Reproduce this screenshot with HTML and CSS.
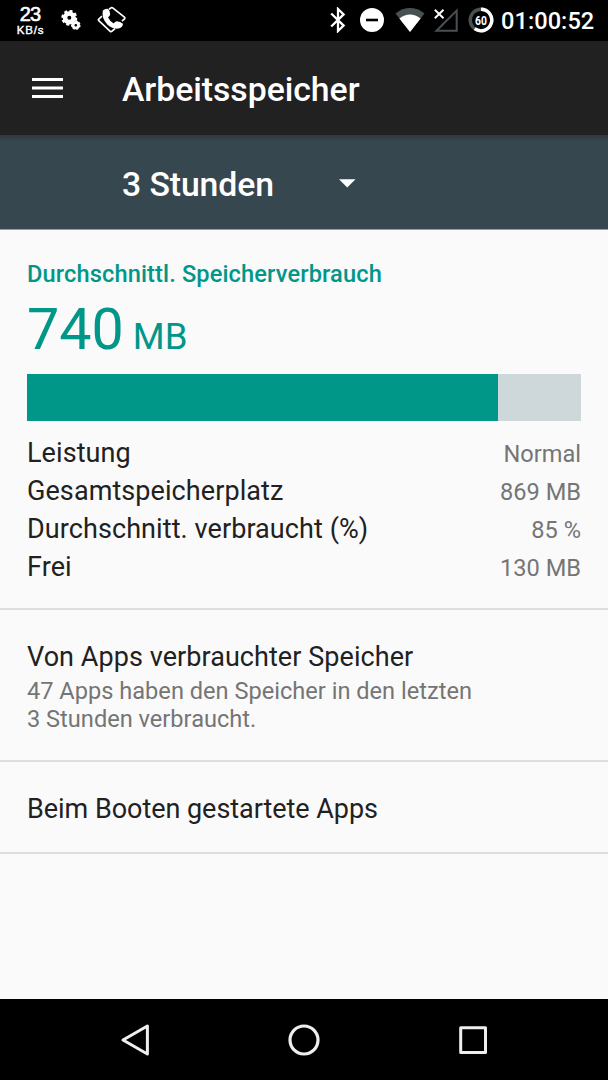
FILE: index.html
```html
<!DOCTYPE html>
<html lang="de">
<head>
<meta charset="utf-8">
<title>Arbeitsspeicher</title>
<link rel="stylesheet" href="styles.css">
</head>
<body>
<div class="screen">
  <div class="statusbar">
    <div class="status-left">
      <div class="netspeed"><span class="netspeed-value">23</span><span class="netspeed-unit">KB/s</span></div>
      <svg class="icon-gears" width="20" height="22" viewBox="0 0 20 22">
        <circle cx="8.3" cy="7.8" r="4.3" fill="none" stroke="#fff" stroke-width="4.6"/>
        <circle cx="8.3" cy="7.8" r="6.6" fill="none" stroke="#fff" stroke-width="2.8" stroke-dasharray="2.9 2.284"/>
        <circle cx="14.8" cy="15.2" r="2.7" fill="none" stroke="#fff" stroke-width="2.8"/>
        <circle cx="14.8" cy="15.2" r="4" fill="none" stroke="#fff" stroke-width="1.6" stroke-dasharray="2 1.59"/>
      </svg>
      <svg class="icon-phone" width="30" height="28" viewBox="0 0 30 28">
        <path d="M12 3.4 14 1.8Q14.8 1.2 15.7 1.9L27.4 11.2Q28.3 12 27.5 12.8L25 15.2M5 10.2 1.8 13Q1 13.8 1.8 14.6L13.2 25.3Q14 26 14.8 25.4L18 22.5" fill="none" stroke="#fff" stroke-width="1.7"/>
        <path d="M5.8 4.6Q8.3 2.3 11.2 2.9Q13.2 4.8 13.2 8.2Q13 10.2 11 11.2Q12.6 14.9 16.8 17.6Q17.8 15.8 19.6 15.3Q23.4 15.6 26 17.7Q25.8 21.1 22.6 22.3Q16.6 23.8 10.5 18.8Q4.3 12.4 5.8 4.6Z" fill="#fff"/>
      </svg>
    </div>
    <div class="status-right">
      <svg width="16" height="26" viewBox="0 0 16 26"><path d="M1.2 6.5 13.6 18.6 8 24V2L13.6 7.4 1.2 19.5" fill="none" stroke="#fff" stroke-width="2.3"/></svg>
      <svg class="icon-dnd" width="26" height="26" viewBox="0 0 26 26"><circle cx="13" cy="13" r="12" fill="#fff"/><path d="M7 13H19" stroke="#000" stroke-width="2.6"/></svg>
      <svg class="icon-wifi" width="30" height="26" viewBox="0 0 30 26"><path d="M.5 6.5Q15-4.3 29.5 6.5L15 25Z" fill="#495054"/><path d="M4.4 11.5Q15 3.7 25.6 11.5L15 25Z" fill="#fff"/></svg>
      <svg class="icon-signal" width="26" height="26" viewBox="0 0 26 26"><path d="M3.5 23.8H23.7V3.6Z" fill="none" stroke="#495054" stroke-width="2"/><path d="M1.8 2.7 10.5 11.3M10.5 2.7 1.8 11.3" stroke="#fff" stroke-width="1.9"/></svg>
      <svg class="icon-battery" width="26" height="26" viewBox="0 0 26 26">
        <circle cx="13" cy="13" r="10.8" fill="none" stroke="#495054" stroke-width="3.4"/>
        <path d="M13 2.2A10.8 10.8 0 1 1 6.65 21.74" fill="none" stroke="#fff" stroke-width="3.4"/>
        <text class="battery-text" x="13" y="17.6" text-anchor="middle" textLength="11.8" lengthAdjust="spacingAndGlyphs">60</text>
      </svg>
      <span class="clock">01:00:52</span>
    </div>
  </div>
  <header class="appbar">
    <svg class="menu" width="32" height="22" viewBox="0 0 32 22"><path d="M0 2.5H31M0 11H31M0 19.5H31" stroke="#fff" stroke-width="3.2"/></svg>
    <h1 class="title">Arbeitsspeicher</h1>
  </header>
  <div class="spinner">
    <span class="spinner-label">3 Stunden</span>
    <svg class="caret" width="18" height="10" viewBox="0 0 18 10"><path d="M0 .2H16.5L8.25 8.5Z" fill="#fff"/></svg>
  </div>
  <main class="content">
    <section class="summary">
      <h2 class="caption">Durchschnittl. Speicherverbrauch</h2>
      <div class="usage"><span class="usage-value">740</span><span class="usage-unit">MB</span></div>
      <div class="bar"><div class="bar-fill" style="width:85%"></div></div>
      <dl class="stats">
        <div class="stat"><dt>Leistung</dt><dd>Normal</dd></div>
        <div class="stat"><dt>Gesamtspeicherplatz</dt><dd>869 MB</dd></div>
        <div class="stat"><dt>Durchschnitt. verbraucht (%)</dt><dd>85 %</dd></div>
        <div class="stat"><dt>Frei</dt><dd>130 MB</dd></div>
      </dl>
    </section>
    <section class="item item-apps">
      <div class="item-title">Von Apps verbrauchter Speicher</div>
      <div class="item-sub">47 Apps haben den Speicher in den letzten<br>3 Stunden verbraucht.</div>
    </section>
    <section class="item item-boot">
      <div class="item-title boot-title">Beim Booten gestartete Apps</div>
    </section>
  </main>
  <nav class="navbar">
    <svg width="34" height="34" viewBox="0 0 34 34"><path d="M29.4 3V31L5 17Z" fill="none" stroke="#eee" stroke-width="3" stroke-linejoin="round"/></svg>
    <svg width="34" height="34" viewBox="0 0 34 34"><circle cx="17" cy="17" r="14" fill="none" stroke="#eee" stroke-width="3.2"/></svg>
    <svg width="34" height="34" viewBox="0 0 34 34"><rect x="4.7" y="4.7" width="24.8" height="24.8" fill="none" stroke="#eee" stroke-width="3" stroke-linejoin="round"/></svg>
  </nav>
</div>
</body>
</html>
```
FILE: styles.css
```css
* { box-sizing: border-box; }
body { margin: 0; font-family: Roboto, "Noto Sans", sans-serif; background: #000; }
h1, h2, dl, dt, dd { margin: 0; font-weight: 400; }
svg { display: block; flex: none; }
.screen { width: 608px; height: 1080px; display: flex; flex-direction: column; overflow: hidden; }
.statusbar { height: 41px; background: #000; color: #fff; display: flex; justify-content: space-between; flex: none; }
.status-left { display: flex; align-items: flex-start; padding-left: 15px; }
.netspeed { width: 30px; padding-top: 4px; display: flex; flex-direction: column; align-items: center; font-family: "Liberation Sans", sans-serif; }
.netspeed-value { font-size: 20px; line-height: 20px; letter-spacing: -.8px; -webkit-text-stroke: .6px #fff; }
.netspeed-unit { padding-left: 1px; font-size: 11.5px; line-height: 13px; letter-spacing: .8px; -webkit-text-stroke: .4px #fff; white-space: nowrap; }
.icon-gears { margin: 10px 0 0 16px; }
.icon-phone { margin: 6px 0 0 16px; }
.status-right { display: flex; padding: 7px 13px 0 0; }
.icon-dnd { margin-left: 13px; }
.icon-wifi { margin-left: 10px; }
.icon-signal { margin-left: 8px; }
.icon-battery { margin-left: 9px; }
.battery-text { font-size: 12.5px; font-weight: 700; fill: #fff; }
.clock { width: 94px; margin-left: 7px; font-size: 23.6px; font-weight: 500; line-height: 28px; letter-spacing: .05px; white-space: nowrap; }
.appbar { height: 94px; background: #212121; color: #fff; display: flex; align-items: center; flex: none; }
.menu { margin: 0 0 0 32px; }
.title { margin-left: 58px; padding-top: 4px; font-size: 33.8px; font-weight: 500; line-height: 40px; letter-spacing: -.05px; }
.spinner { height: 95px; flex: none; display: flex; align-items: center; padding-left: 122px; background: linear-gradient(#30383c, #37474f 7px); color: #fff; border-bottom: 1px solid #93a19e; }
.spinner-label { width: 217px; padding-top: 5px; font-size: 33.8px; font-weight: 500; line-height: 40px; letter-spacing: -.1px; }
.caret { margin-top: 3px; }
.content { flex: 1; background: #fafafa; color: #212121; }
.summary { height: 380px; padding: 30px 27px 0; border-bottom: 2px solid #dedede; }
.caption { color: #009688; font-size: 23.6px; font-weight: 500; line-height: 28px; letter-spacing: .13px; }
.usage { height: 86px; display: flex; align-items: baseline; gap: 9px; color: #009688; line-height: 84px; }
.usage-value { font-size: 57.4px; }
.usage-unit { font-size: 36.5px; }
.bar { height: 47px; background: #ced7da; }
.bar-fill { height: 47px; background: #009688; }
.stats { padding-top: 13px; }
.stat { height: 38px; display: flex; align-items: baseline; justify-content: space-between; line-height: 38px; }
.stat dt { font-size: 27px; letter-spacing: .08px; }
.stat dd { font-size: 23.6px; color: #757575; }
.item { padding: 31px 27px 0; border-bottom: 2px solid #dedede; }
.item-apps { height: 152px; }
.item-boot { height: 92px; }
.item-title { font-size: 27px; line-height: 32px; letter-spacing: .06px; }
.boot-title { letter-spacing: -.04px; }
.item-sub { margin-top: 4px; font-size: 23.6px; line-height: 28px; color: #757575; }
.navbar { height: 81px; flex: none; background: #000; display: flex; align-items: center; justify-content: center; gap: 135px; }
```
